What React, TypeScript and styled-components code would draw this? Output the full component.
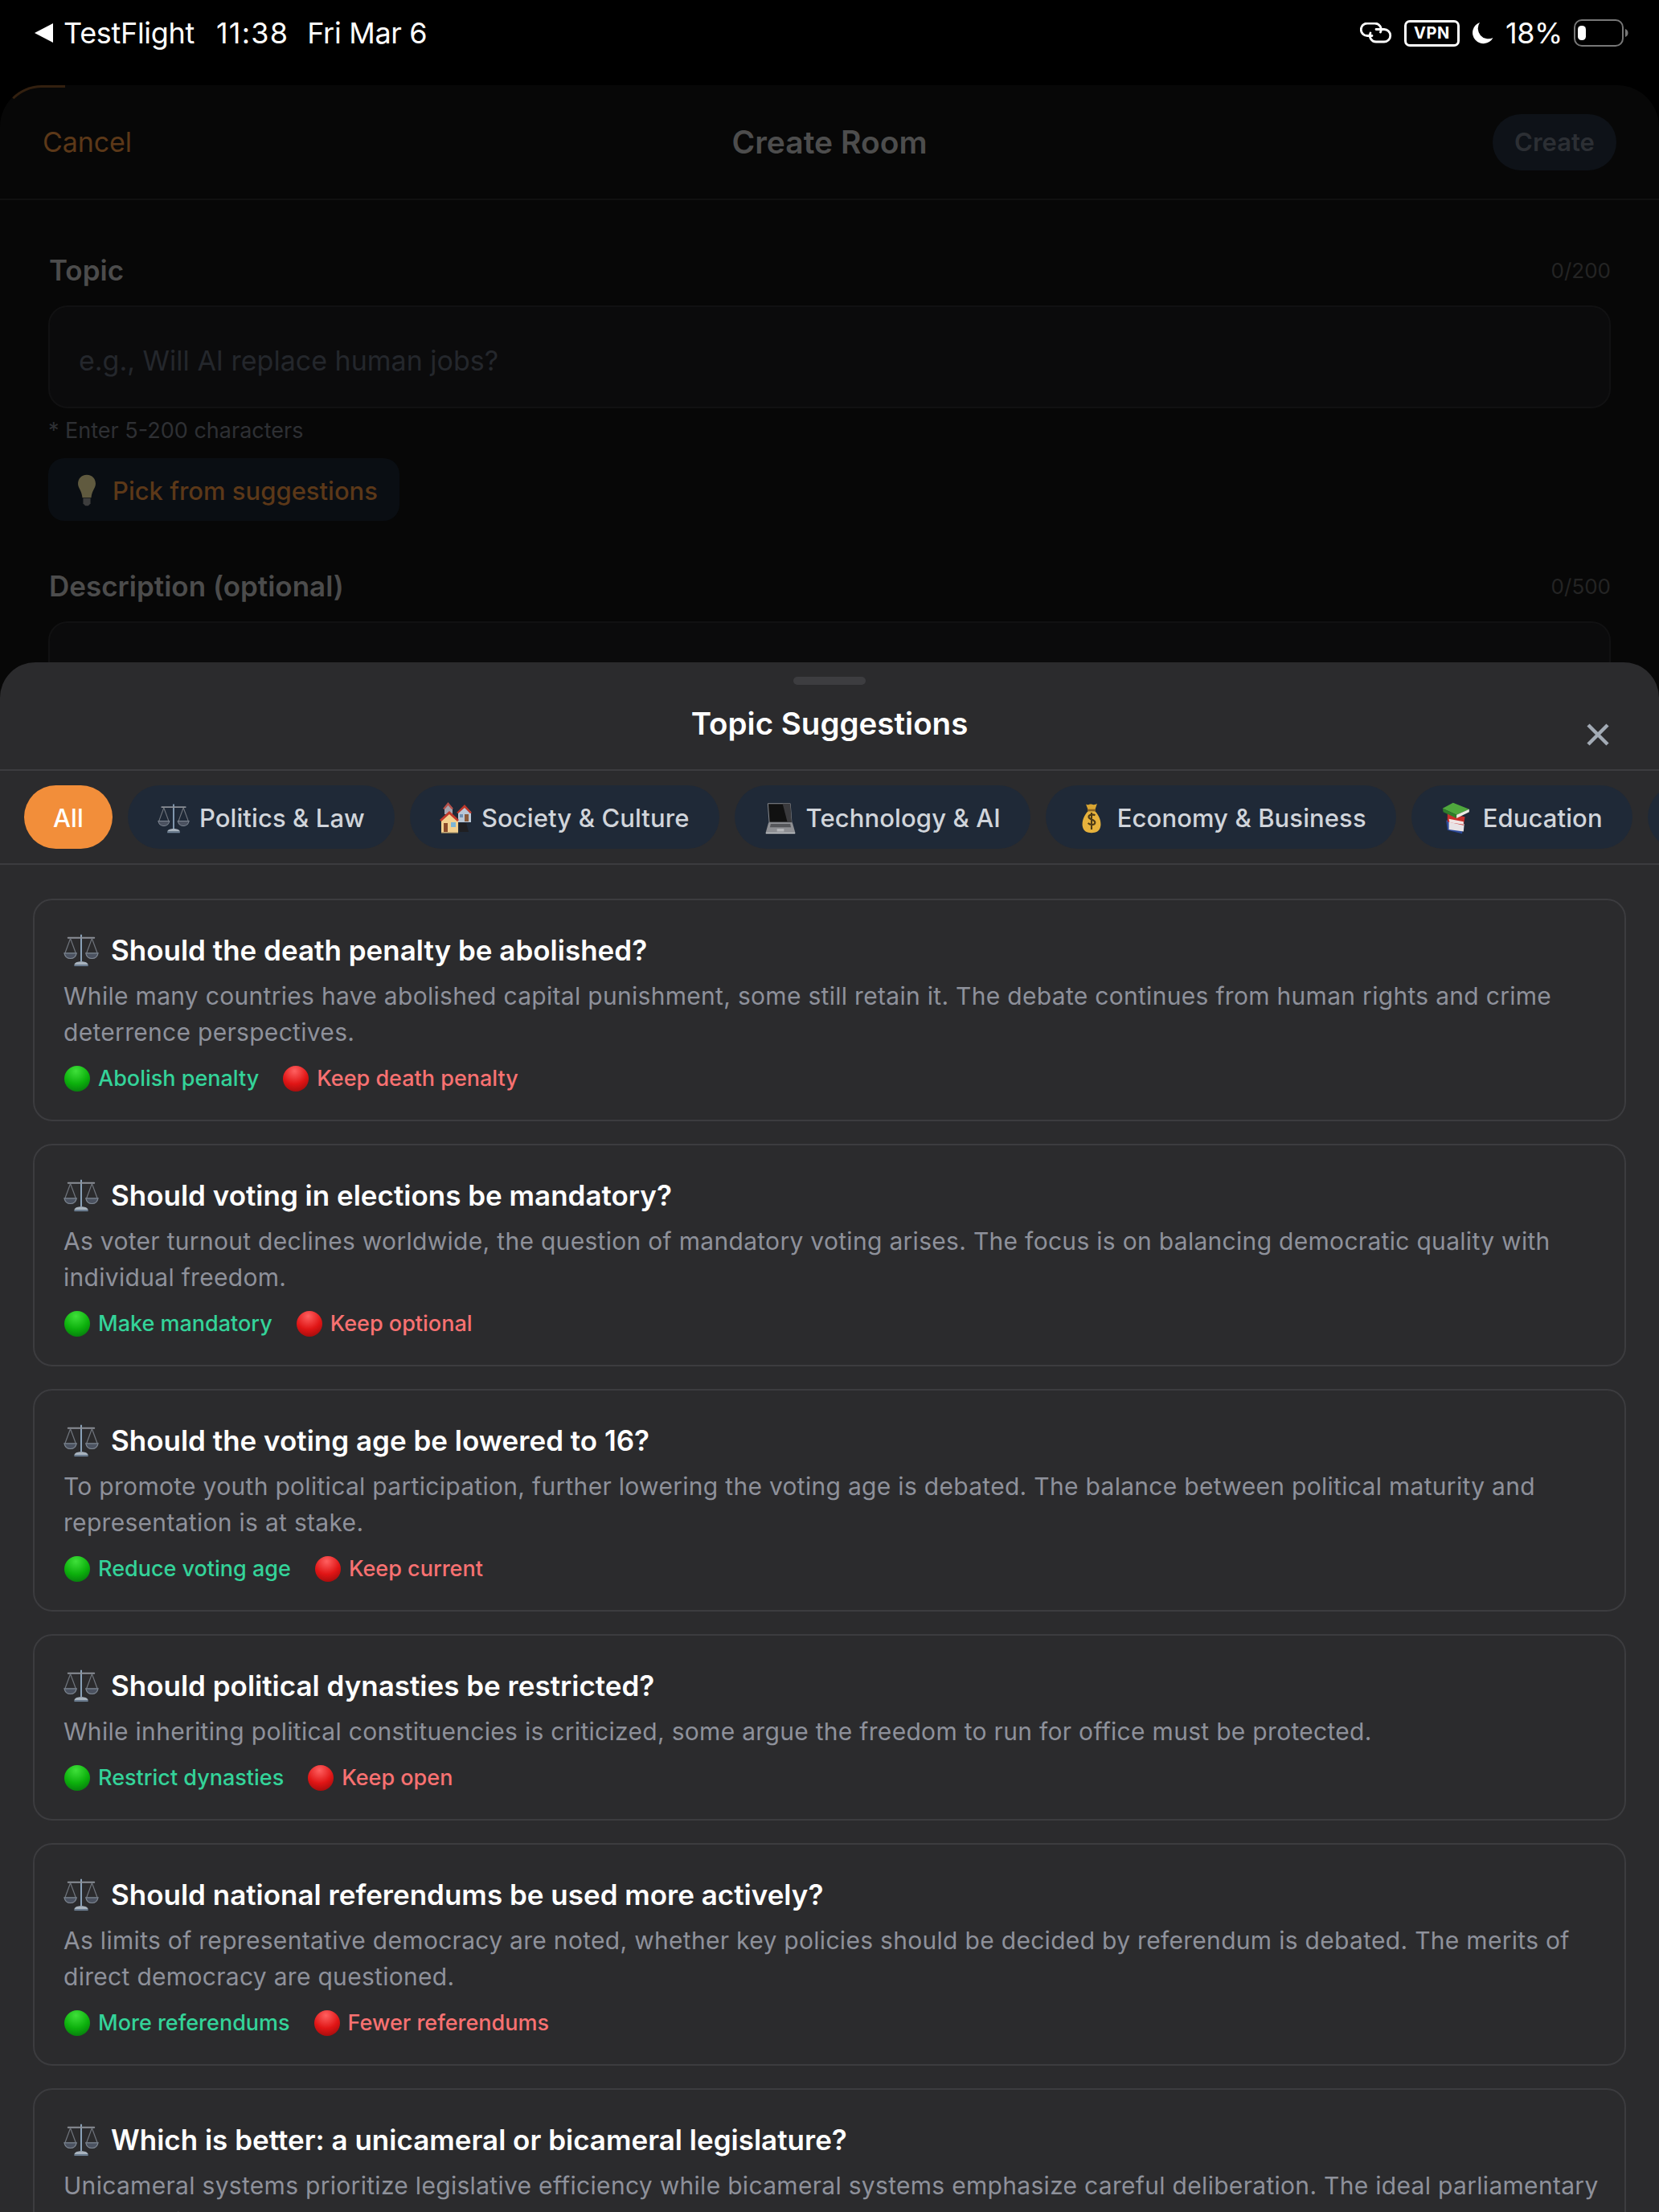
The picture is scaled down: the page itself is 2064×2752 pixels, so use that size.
import React from 'react';
import styled, { createGlobalStyle } from 'styled-components';

const Global = createGlobalStyle`
  html, body { margin: 0; padding: 0; background: #000; }
  * { box-sizing: border-box; }
  body { font-family: Inter, "Noto Sans", sans-serif; -webkit-font-smoothing: antialiased; }
`;

const Screen = styled.div`
  position: relative;
  width: 2064px;
  height: 2752px;
  overflow: hidden;
  background: #000;
  display: flex;
  flex-direction: column;
`;

const StatusBar = styled.div`
  height: 106px;
  flex: none;
  display: flex;
  justify-content: space-between;
  align-items: flex-start;
  padding: 21px 38px 0 42px;
  color: #fff;
  font-size: 36px;
  line-height: 40px;
  letter-spacing: -0.3px;
`;
const StatusLeft = styled.div`display: flex; align-items: center;`;
const BackArrow = styled.svg`width: 24px; height: 24px; margin-right: 13px;`;
const StatusText = styled.span<{ $gap?: number; $spaced?: boolean }>`
  margin-left: ${p => p.$gap ?? 0}px;
  ${p => (p.$spaced ? 'letter-spacing: 1.2px;' : '')}
`;
const StatusRight = styled.div`display: flex; align-items: center;`;
const VpnBadge = styled.div`
  width: 69px; height: 33px; margin: 0 14px 0 15px;
  border: 3px solid #fff; border-radius: 7px;
  display: flex; align-items: center; justify-content: center;
  font-size: 20px; font-weight: 700; letter-spacing: 0.5px; line-height: 1;
`;
const StatusSvg = styled.svg<{ $w: number; $h: number }>`
  width: ${p => p.$w}px; height: ${p => p.$h}px; flex: none; display: block;
`;
const Percent = styled.span`margin: 0 14px 0 15px; font-size: 36px; letter-spacing: -0.4px;`;

const Page = styled.div`
  position: relative;
  flex: 1;
  background: #070707;
  border-radius: 52px 52px 0 0;
  display: flex;
  flex-direction: column;
  &::before {
    content: '';
    position: absolute;
    left: 0;
    top: 0;
    width: 78px;
    height: 52px;
    border-top: 3px solid #33200f;
    border-left: 3px solid transparent;
    border-radius: 52px 0 0 0;
  }
`;
const PageHeader = styled.div`
  height: 143px;
  flex: none;
  padding: 0 53px;
  border-bottom: 2px solid #101010;
  display: grid;
  grid-template-columns: 1fr auto 1fr;
  align-items: center;
`;
const Cancel = styled.span`color: #5c3818; font-size: 34px; letter-spacing: -0.1px;`;
const PageTitle = styled.span`color: #4d4d4d; font-size: 39px; font-weight: 600;`;
const CreateBtn = styled.div`
  width: 154px; height: 70px; justify-self: end;
  border-radius: 35px; background: #0e1218; color: #2c2f34;
  display: flex; align-items: center; justify-content: center;
  font-size: 31px; font-weight: 600;
`;
const Form = styled.div`padding: 0 60px; display: flex; flex-direction: column;`;
const LabelRow = styled.div<{ $mt: number }>`
  margin-top: ${p => p.$mt}px;
  padding-left: 1px;
  display: flex; justify-content: space-between; align-items: center;
`;
const Label = styled.span`color: #4c4c4c; font-size: 35px; font-weight: 600; line-height: 44px;`;
const Count = styled.span`color: #242424; font-size: 26px;`;
const InputBox = styled.div<{ $h: number; $mt: number }>`
  height: ${p => p.$h}px;
  margin-top: ${p => p.$mt}px;
  background: #0b0b0c;
  border: 2px solid #111112;
  border-radius: 24px;
  padding: 8px 36px 0;
  display: flex;
  align-items: center;
  color: #24272c;
  font-size: 34px;
`;
const Hint = styled.div`color: #2e3034; font-size: 27px; line-height: 32px; margin-top: 12px;`;
const PickBtn = styled.div`
  width: 437px; height: 78px; margin-top: 18px;
  background: #0a0e13; border-radius: 20px;
  padding: 2px 0 0 27px;
  display: flex; align-items: center; gap: 11px;
  color: #5c3818; font-size: 31px; font-weight: 500;
`;

const Sheet = styled.div`
  position: absolute;
  left: 0; right: 0; top: 824px; bottom: 0;
  background: #2b2b2d;
  border-radius: 44px 44px 0 0;
  display: flex;
  flex-direction: column;
  overflow: hidden;
`;
const Handle = styled.div`
  width: 90px; height: 10px; margin: 18px auto 0;
  border-radius: 5px; background: #3d3d40; flex: none;
`;
const SheetHeader = styled.div`
  position: relative;
  height: 107px;
  flex: none;
  border-bottom: 2px solid #3c3c3f;
  display: flex;
  justify-content: center;
  padding-top: 20px;
`;
const SheetTitle = styled.h2`
  margin: 0; color: #fff; font-size: 38.5px; font-weight: 600; line-height: 56px;
`;
const CloseIcon = styled.svg`
  position: absolute; right: 62px; top: 48px; width: 28px; height: 28px;
`;
const Tabs = styled.div`
  flex: none;
  height: 117px;
  padding: 18px 0 0 30px;
  border-bottom: 2px solid #3c3c3f;
  display: flex;
  gap: 19px;
  overflow: hidden;
`;
const Pill = styled.div<{ $active?: boolean }>`
  flex: none;
  height: 79px;
  padding: 2px ${p => (p.$active ? 36 : 37)}px 0;
  border-radius: 40px;
  background: ${p => (p.$active ? '#f28e3a' : '#1f2937')};
  color: ${p => (p.$active ? '#fff' : '#d1d5db')};
  font-size: 31px;
  font-weight: 500;
  letter-spacing: 0.1px;
  display: flex;
  align-items: center;
  gap: 12px;
`;
const List = styled.div`
  flex: 1;
  padding: 42px 41px 0;
  display: flex;
  flex-direction: column;
  gap: 28px;
  overflow: hidden;
`;
const Card = styled.div`
  flex: none;
  padding: 40px 20px 29px 36px;
  border: 2px solid #3c3c3f;
  border-radius: 24px;
`;
const CardTitle = styled.div`
  display: flex; align-items: center; gap: 15px;
  color: #fff; font-size: 35px; font-weight: 600; line-height: 44px;
`;
const CardDesc = styled.p`
  margin: 13px 0 0; color: #8e919b; font-size: 30px; line-height: 45px; letter-spacing: 0.3px;
`;
const Stances = styled.div`display: flex; gap: 30px; margin-top: 13px; padding-left: 1px;`;
const Stance = styled.div<{ $tone: 'pro' | 'con' }>`
  display: flex; align-items: center; gap: 10px;
  color: ${p => (p.$tone === 'pro' ? '#34d399' : '#f87171')};
  font-size: 27px; font-weight: 500; line-height: 44px;
`;
const Emoji = styled.svg<{ $s: number }>`
  width: ${p => p.$s}px; height: ${p => p.$s}px; flex: none; display: block;
`;

const Scales = ({ s }: { s: number }) => (
  <Emoji $s={s} viewBox="0 0 46 46" fill="none">
    <path d="M23 3v35" stroke="#8ea7bf" strokeWidth="2" />
    <path d="M6 7h34" stroke="#8b8f96" strokeWidth="2" strokeLinecap="round" />
    <path d="M9 8 2 27M9 8l7 19M37 8l-7 19M37 8l7 19" stroke="#6f747c" strokeWidth="1.3" />
    <path d="M1 27h16c-1 5-4 7-8 7s-7-2-8-7ZM29 27h16c-1 5-4 7-8 7s-7-2-8-7Z" fill="#4b5260" stroke="#7e8792" strokeWidth="1.2" />
    <path d="M14 42c1-3 5-4 9-4s8 1 9 4Z" fill="#a9b4bf" />
    <path d="M14 43h18" stroke="#6f8297" strokeWidth="2" />
  </Emoji>
);
const Houses = ({ s }: { s: number }) => (
  <Emoji $s={s} viewBox="0 0 40 40" fill="none">
    <path d="M6 7 10.500 1 16 7v8H6Z" fill="#a4a4ae" />
    <path d="M4 8 10.500 0 17 8l-2 1-4.500-5L6 9Z" fill="#b5504a" />
    <path d="M23 12 31 5l8 7v13H23Z" fill="#b9c7d6" />
    <path d="M21 13 31 3l9 10-2 1-7-7-8 7Z" fill="#c0392b" />
    <rect x="31" y="15" width="5" height="9" fill="#8a5a3a" />
    <rect x="25" y="15" width="4" height="4" fill="#6d8fb3" />
    <path d="M24 26h9l3 11H25Z" fill="#1f1f22" />
    <path d="M2 22 12 13l11 9v15H2Z" fill="#f3d08f" />
    <path d="M0 22 12 11l12 11-2 2L12 15 2 24Z" fill="#c0392b" />
    <rect x="5" y="26" width="5" height="11" fill="#8a4a2b" />
    <rect x="14" y="25" width="6" height="6" fill="#7db6d6" />
    <path d="M2 37h21v1.500H2Z" fill="#c9ad78" />
  </Emoji>
);
const Laptop = ({ s }: { s: number }) => (
  <Emoji $s={s} viewBox="0 0 46 46" fill="none">
    <path d="M5 2h32l2 27H7Z" fill="#111" stroke="#9a9ca0" strokeWidth="1" />
    <path d="M26 2h11l2 27h-6Z" fill="#3a3a3d" />
    <path d="M6 29h34l4 14H2Z" fill="#8e8f93" />
    <path d="M9 31h28l1 5H8Z" fill="#55565a" />
    <path d="M2 43h42v2H2Z" fill="#c9cacc" />
    <rect x="18" y="38" width="10" height="4" fill="#b5b6b9" />
  </Emoji>
);
const MoneyBag = ({ s }: { s: number }) => (
  <Emoji $s={s} viewBox="0 0 46 46" fill="none">
    <path d="M15 3c3 2 5-1 8 0s5 1 8-1l-3 9H18Z" fill="#d9a531" />
    <rect x="17" y="10" width="12" height="3" rx="1.5" fill="#8d6420" />
    <path d="M18 13c-5 5-9 13-8 21 1 8 7 10 13 10s12-2 13-10c1-8-3-16-8-21Z" fill="#e7b23c" />
    <path d="M28 19c-2-2-9-2-9 2 0 5 9 3 9 8 0 4-7 4-10 1M23 15v24" stroke="#4d3a16" strokeWidth="2.4" />
  </Emoji>
);
const Books = ({ s }: { s: number }) => (
  <Emoji $s={s} viewBox="0 0 46 46" fill="none">
    <path d="M7 26 31 31l-1 14L9 40Z" fill="#2c4a9a" />
    <path d="M11 28 33 31l-1 11-21-3Z" fill="#e8e3e6" />
    <path d="M9 16 34 21l-2 12-23-5Z" fill="#c9302c" />
    <path d="M11 24l21 4v4l-20-3Z" fill="#f0e6e6" />
    <path d="M2 9 17 1l23 9-18 8Z" fill="#4fa83d" />
    <path d="M2 9l20 9v5L3 14Z" fill="#2f7d2a" />
    <path d="M22 18l18-8v4L22 23Z" fill="#eceae2" />
  </Emoji>
);
const Globe = ({ s }: { s: number }) => (
  <Emoji $s={s} viewBox="0 0 46 46"><circle cx="23" cy="23" r="20" fill="#3f7fc4" /></Emoji>
);
const Bulb = ({ s }: { s: number }) => (
  <Emoji $s={s} viewBox="0 0 30 46" fill="none">
    <path d="M15 2C7 2 3 8 3 14c0 6 5 9 6 19h12c1-10 6-13 6-19C27 8 23 2 15 2Z" fill="#605a3f" />
    <path d="M10 34h10v7l-3 3h-4l-3-3Z" fill="#3d3d3d" />
  </Emoji>
);
const Ball = ({ s, tone }: { s: number; tone: 'pro' | 'con' }) => {
  const id = tone === 'pro' ? 'ballPro' : 'ballCon';
  const [a, b, c] = tone === 'pro' ? ['#3fe03a', '#0cb00c', '#067a0e'] : ['#ff6060', '#e01515', '#a00c0c'];
  return (
    <Emoji $s={s} viewBox="0 0 32 32">
      <defs>
        <radialGradient id={id} cx="0.45" cy="0.2" r="0.85">
          <stop offset="0" stopColor={a} />
          <stop offset="0.6" stopColor={b} />
          <stop offset="1" stopColor={c} />
        </radialGradient>
      </defs>
      <circle cx="16" cy="16" r="16" fill={`url(#${id})`} />
    </Emoji>
  );
};

const categories = [
  { label: 'Politics & Law', Icon: Scales },
  { label: 'Society & Culture', Icon: Houses },
  { label: 'Technology & AI', Icon: Laptop },
  { label: 'Economy & Business', Icon: MoneyBag },
  { label: 'Education', Icon: Books },
  { label: 'Environment', Icon: Globe },
];

const topics = [
  {
    title: 'Should the death penalty be abolished?',
    desc: 'While many countries have abolished capital punishment, some still retain it. The debate continues from human rights and crime deterrence perspectives.',
    pro: 'Abolish penalty', con: 'Keep death penalty',
  },
  {
    title: 'Should voting in elections be mandatory?',
    desc: 'As voter turnout declines worldwide, the question of mandatory voting arises. The focus is on balancing democratic quality with individual freedom.',
    pro: 'Make mandatory', con: 'Keep optional',
  },
  {
    title: 'Should the voting age be lowered to 16?',
    desc: 'To promote youth political participation, further lowering the voting age is debated. The balance between political maturity and representation is at stake.',
    pro: 'Reduce voting age', con: 'Keep current',
  },
  {
    title: 'Should political dynasties be restricted?',
    desc: 'While inheriting political constituencies is criticized, some argue the freedom to run for office must be protected.',
    pro: 'Restrict dynasties', con: 'Keep open',
  },
  {
    title: 'Should national referendums be used more actively?',
    desc: 'As limits of representative democracy are noted, whether key policies should be decided by referendum is debated. The merits of direct democracy are questioned.',
    pro: 'More referendums', con: 'Fewer referendums',
  },
  {
    title: 'Which is better: a unicameral or bicameral legislature?',
    desc: 'Unicameral systems prioritize legislative efficiency while bicameral systems emphasize careful deliberation. The ideal parliamentary structure is debated.',
    pro: 'Unicameral', con: 'Bicameral',
  },
];

export default function App() {
  return (
    <Screen>
      <Global />
      <StatusBar>
        <StatusLeft>
          <BackArrow viewBox="0 0 24 24"><path d="M24 0v24L1 12Z" fill="#fff" /></BackArrow>
          <StatusText>TestFlight</StatusText>
          <StatusText $gap={27} $spaced>11:38</StatusText>
          <StatusText $gap={23}>Fri Mar 6</StatusText>
        </StatusLeft>
        <StatusRight>
          <StatusSvg $w={40} $h={26} viewBox="0 0 40 26" fill="none" stroke="#fff" strokeWidth="2.8" strokeLinecap="round">
            <path d="M15 16.500H9a7.750 7.750 0 0 1 0-15.500h9.500a7.750 7.750 0 0 1 7 11" />
            <path d="M20 8.500h10a7.750 7.750 0 0 1 0 15.500H20a7.750 7.750 0 0 1-7-11" />
          </StatusSvg>
          <VpnBadge>VPN</VpnBadge>
          <StatusSvg $w={28} $h={28} viewBox="0 0 28 28">
            <path d="M11 1A13.500 13.500 0 1 0 27.500 20 13 13 0 0 1 11 1Z" fill="#fff" />
          </StatusSvg>
          <Percent>18%</Percent>
          <StatusSvg $w={68} $h={34} viewBox="0 0 68 34" fill="none">
            <rect x="1" y="1" width="60" height="32" rx="9" stroke="#777" strokeWidth="2" />
            <rect x="5" y="8" width="10" height="18" rx="4.500" fill="#fff" />
            <path d="M64 12c2 .5 3.500 2.500 3.500 5s-1.500 4.500-3.500 5Z" fill="#777" />
          </StatusSvg>
        </StatusRight>
      </StatusBar>

      <Page>
        <PageHeader>
          <Cancel>Cancel</Cancel>
          <PageTitle>Create Room</PageTitle>
          <CreateBtn>Create</CreateBtn>
        </PageHeader>
        <Form>
          <LabelRow $mt={65}>
            <Label>Topic</Label>
            <Count>0/200</Count>
          </LabelRow>
          <InputBox $h={128} $mt={22}>e.g., Will AI replace human jobs?</InputBox>
          <Hint>* Enter 5-200 characters</Hint>
          <PickBtn><Bulb s={42} />Pick from suggestions</PickBtn>
          <LabelRow $mt={59}>
            <Label>Description (optional)</Label>
            <Count>0/500</Count>
          </LabelRow>
          <InputBox $h={200} $mt={22} />
        </Form>
      </Page>

      <Sheet>
        <Handle />
        <SheetHeader>
          <SheetTitle>Topic Suggestions</SheetTitle>
          <CloseIcon viewBox="0 0 28 28" fill="none" stroke="#a3abb5" strokeWidth="4.500">
            <path d="M2 2l24 24M26 2 2 26" />
          </CloseIcon>
        </SheetHeader>
        <Tabs>
          <Pill $active>All</Pill>
          {categories.map(({ label, Icon }) => (
            <Pill key={label}><Icon s={40} />{label}</Pill>
          ))}
        </Tabs>
        <List>
          {topics.map(t => (
            <Card key={t.title}>
              <CardTitle><Scales s={44} />{t.title}</CardTitle>
              <CardDesc>{t.desc}</CardDesc>
              <Stances>
                <Stance $tone="pro"><Ball s={32} tone="pro" />{t.pro}</Stance>
                <Stance $tone="con"><Ball s={32} tone="con" />{t.con}</Stance>
              </Stances>
            </Card>
          ))}
        </List>
      </Sheet>
    </Screen>
  );
}
